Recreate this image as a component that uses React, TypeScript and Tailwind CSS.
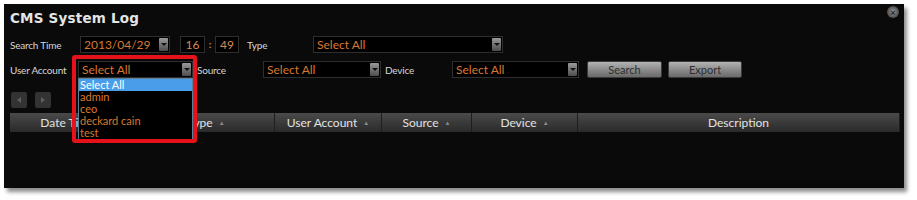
import React from 'react';

const ui = { fontFamily: 'Lato, "Open Sans", sans-serif' };

function Arrow() {
  return (
    <span className="flex h-[13px] w-[9px] shrink-0 items-center justify-center rounded-[1px] bg-gradient-to-b from-[#9a9a9a] to-[#4e4e4e]">
      <span className="h-0 w-0 border-x-[3px] border-t-[3px] border-x-transparent border-t-[#111]" />
    </span>
  );
}

function Select({ w, text }: { w: string; text: string }) {
  return (
    <div className={`flex h-[17px] ${w} items-center justify-between border border-[#2e2e2e] bg-black pl-[3px] pr-[1px]`}>
      <span className="text-[12px] leading-none text-[#d9782f]">{text}</span>
      <Arrow />
    </div>
  );
}

function Label({ w, text }: { w: string; text: string }) {
  return <span className={`${w} shrink-0 text-[10px] leading-none tracking-[-0.2px] text-[#d6d6d6]`}>{text}</span>;
}

function Btn({ w, text }: { w: string; text: string }) {
  return (
    <button className={`h-[17px] ${w} rounded-[2px] border border-[#3a3a3a] bg-gradient-to-b from-[#b4b4b4] via-[#8c8c8c] to-[#6a6a6a] text-[11px] leading-none text-[#2e2e2e]`}>
      {text}
    </button>
  );
}

function Head({ w, text, sort = true }: { w: string; text: string; sort?: boolean }) {
  return (
    <div className={`flex h-full ${w} items-center justify-center gap-[6px] border-r border-[#1e1e1e] text-[12px] text-[#e2e2e2]`}>
      {text}
      {sort && <span className="text-[6px] text-[#8a8a8a]">▲</span>}
    </div>
  );
}

const users = ['admin', 'ceo', 'deckard cain', 'test'];

export default function App() {
  return (
    <div className="h-[200px] w-[917px] bg-white pl-[4px] pt-[4px]" style={ui}>
      <div className="relative h-[184px] w-[900px] bg-[#0a0a0a] pl-[6px] shadow-[3px_4px_4px_rgba(0,0,0,0.45)]">
        {/* close */}
        <div className="absolute right-[5px] top-[2px] flex h-[12px] w-[12px] items-center justify-center rounded-full bg-[radial-gradient(circle,#9a9a9a,#2a2a2a)] text-[10px] font-bold leading-none text-[#222]">
          ×
        </div>

        <div className="flex h-[28px] items-center pt-[1px]">
          <span className="text-[13.5px] font-bold tracking-[0.2px] text-[#e4e4e4]" style={{ fontFamily: '"DejaVu Sans", sans-serif' }}>
            CMS System Log
          </span>
        </div>

        {/* row 1 */}
        <div className="mt-[4px] flex h-[17px] items-center">
          <Label w="w-[70px]" text="Search Time" />
          <Select w="w-[90px]" text="2013/04/29" />
          <div className="ml-[10px] flex h-[17px] w-[25px] items-center justify-center border border-[#2e2e2e] bg-black text-[12px] text-[#d48a5c]">16</div>
          <span className="w-[10px] text-center text-[10px] font-bold text-[#c98a5c]">:</span>
          <div className="flex h-[17px] w-[24px] items-center justify-center border border-[#2e2e2e] bg-black text-[12px] text-[#d48a5c]">49</div>
          <Label w="ml-[8px] w-[66px]" text="Type" />
          <Select w="w-[190px]" text="Select All" />
        </div>

        {/* row 2 */}
        <div className="mt-[8px] flex h-[17px] items-center">
          <Label w="w-[68px]" text="User Account" />
          <div className="relative z-10">
            <Select w="w-[115px]" text="Select All" />
            <div className="absolute left-0 top-full w-[115px] border border-[#5d7f98] bg-black text-[11px] leading-[12px]">
              <div className="bg-[#4a9de9] pl-[1px] text-white">Select All</div>
              {users.map((u) => (
                <div key={u} className="pl-[1px] text-[#d9782f]">
                  {u}
                </div>
              ))}
            </div>
            <div className="pointer-events-none absolute left-[-6px] top-[-6px] h-[88px] w-[125px] rounded-[3px] border-4 border-[#e5121b]" />
          </div>
          <Label w="ml-[4px] w-[66px]" text="Source" />
          <Select w="w-[118px]" text="Select All" />
          <Label w="ml-[4px] w-[67px]" text="Device" />
          <Select w="w-[127px]" text="Select All" />
          <div className="ml-[8px] flex gap-[6px]">
            <Btn w="w-[75px]" text="Search" />
            <Btn w="w-[74px]" text="Export" />
          </div>
        </div>

        {/* paging */}
        <div className="mt-[14px] flex h-[16px] gap-[8px] pl-[1px]">
          <div className="flex h-[16px] w-[16px] items-center justify-center rounded-[2px] bg-[#333]">
            <span className="h-0 w-0 border-y-[3px] border-r-[4px] border-y-transparent border-r-[#5e5e5e]" />
          </div>
          <div className="flex h-[16px] w-[16px] items-center justify-center rounded-[2px] bg-[#333]">
            <span className="h-0 w-0 border-y-[3px] border-l-[4px] border-y-transparent border-l-[#5e5e5e]" />
          </div>
        </div>

        {/* table header */}
        <div className="mt-[5px] flex h-[19px] w-[890px] bg-gradient-to-b from-[#4a4a4a] via-[#3a3a3a] to-[#2a2a2a]">
          <Head w="w-[128px]" text="Date Time" />
          <Head w="w-[137px]" text="Type" />
          <Head w="w-[107px]" text="User Account" />
          <Head w="w-[90px]" text="Source" />
          <Head w="w-[106px]" text="Device" />
          <Head w="flex-1" text="Description" sort={false} />
        </div>
      </div>
    </div>
  );
}
